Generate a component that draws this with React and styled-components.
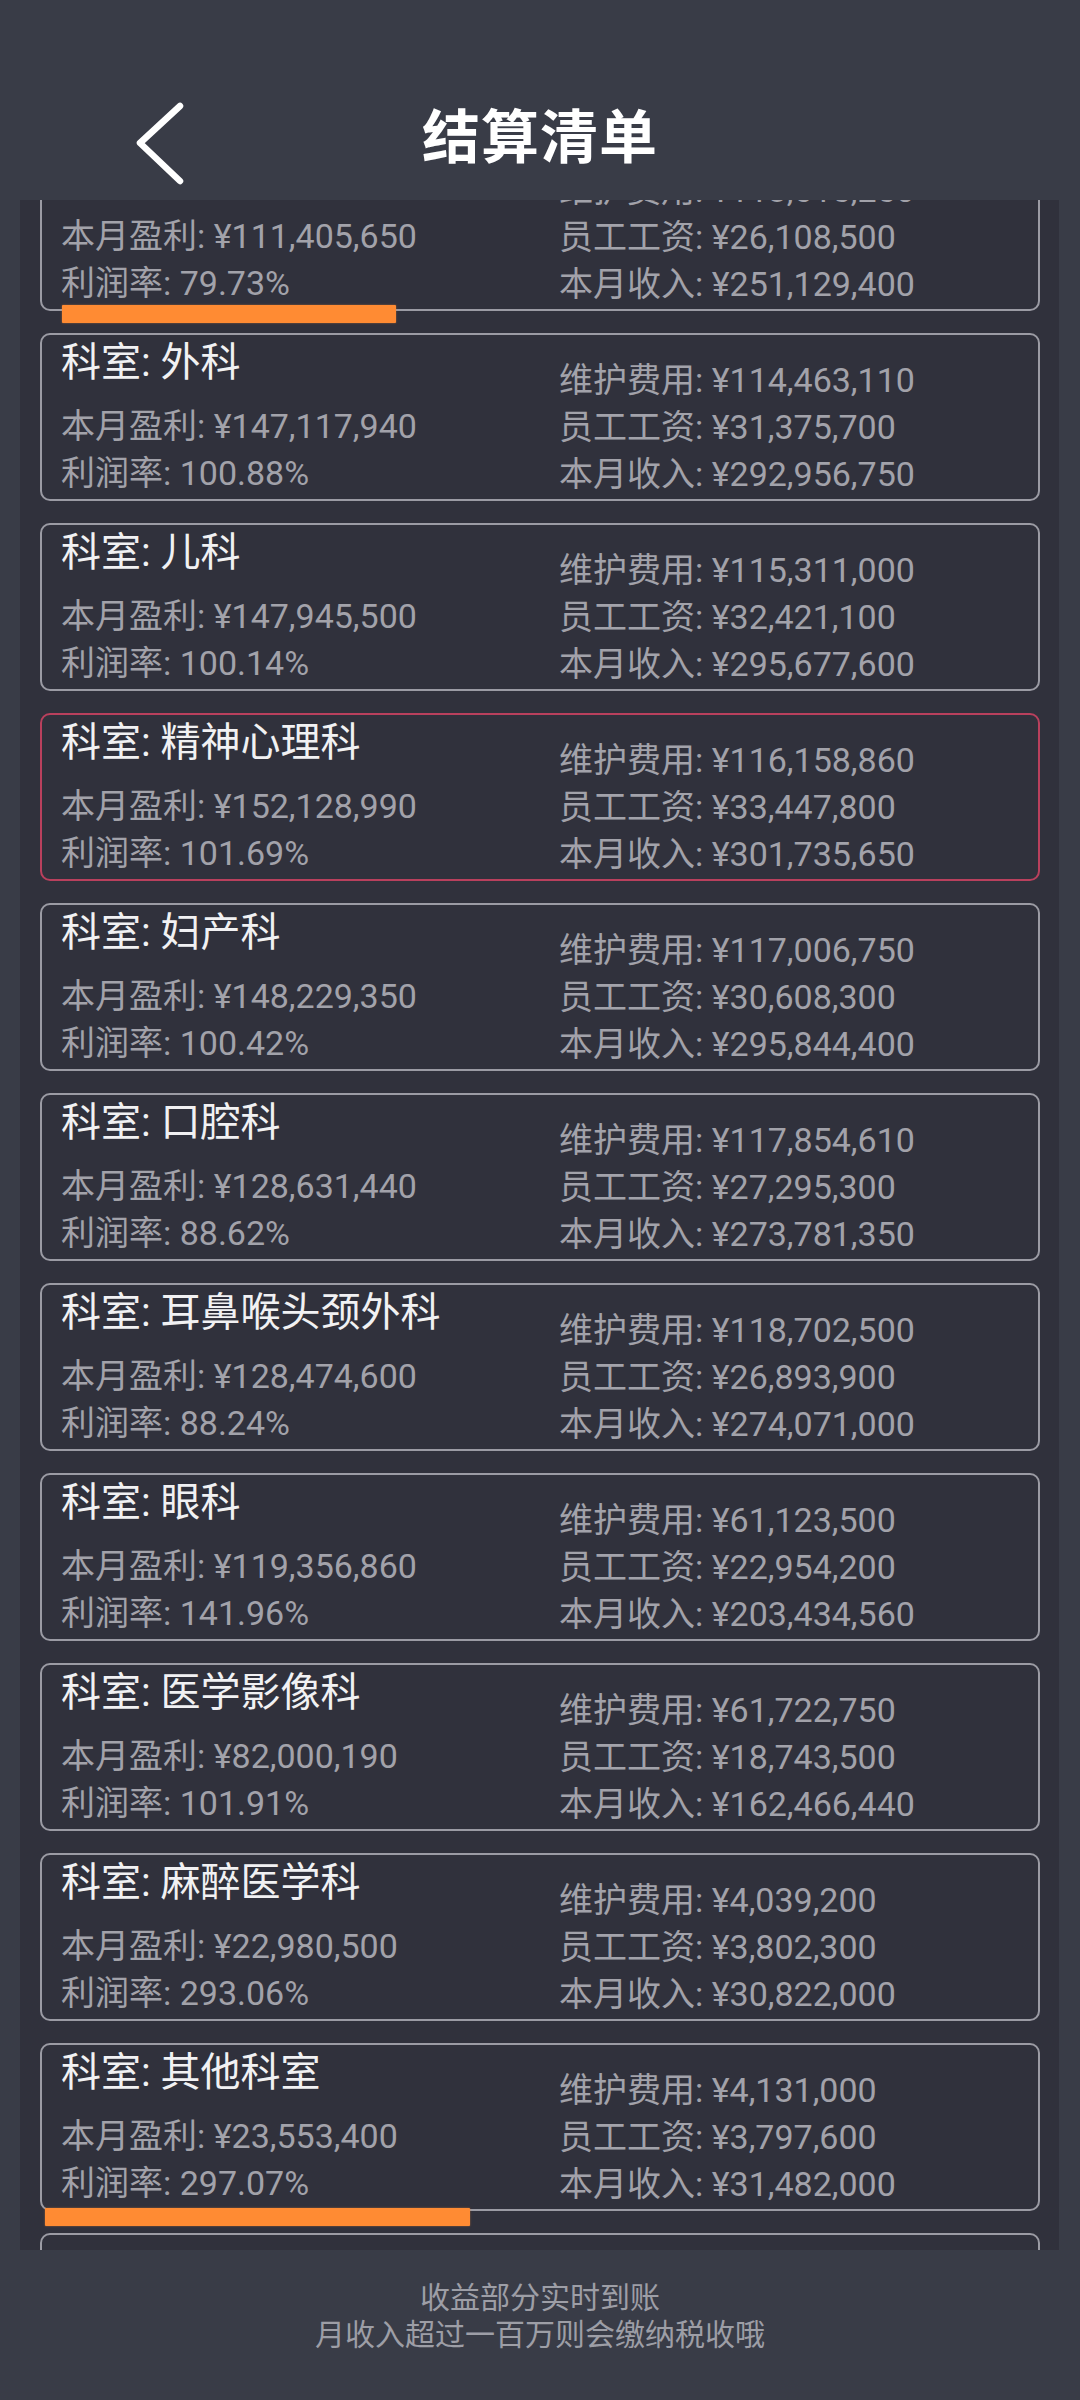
import styled, { createGlobalStyle } from "styled-components";

const GlobalStyle = createGlobalStyle`
  html, body {
    margin: 0;
    padding: 0;
    background: #393c47;
  }
  body {
    font-family: "Roboto", "Noto Sans CJK SC", sans-serif;
  }
`;

const departments = [
  { name: "内科", profit: "¥111,405,650", rate: "79.73%", upkeep: "¥113,615,250", salary: "¥26,108,500", income: "¥251,129,400" },
  { name: "外科", profit: "¥147,117,940", rate: "100.88%", upkeep: "¥114,463,110", salary: "¥31,375,700", income: "¥292,956,750" },
  { name: "儿科", profit: "¥147,945,500", rate: "100.14%", upkeep: "¥115,311,000", salary: "¥32,421,100", income: "¥295,677,600" },
  { name: "精神心理科", profit: "¥152,128,990", rate: "101.69%", upkeep: "¥116,158,860", salary: "¥33,447,800", income: "¥301,735,650", active: true },
  { name: "妇产科", profit: "¥148,229,350", rate: "100.42%", upkeep: "¥117,006,750", salary: "¥30,608,300", income: "¥295,844,400" },
  { name: "口腔科", profit: "¥128,631,440", rate: "88.62%", upkeep: "¥117,854,610", salary: "¥27,295,300", income: "¥273,781,350" },
  { name: "耳鼻喉头颈外科", profit: "¥128,474,600", rate: "88.24%", upkeep: "¥118,702,500", salary: "¥26,893,900", income: "¥274,071,000" },
  { name: "眼科", profit: "¥119,356,860", rate: "141.96%", upkeep: "¥61,123,500", salary: "¥22,954,200", income: "¥203,434,560" },
  { name: "医学影像科", profit: "¥82,000,190", rate: "101.91%", upkeep: "¥61,722,750", salary: "¥18,743,500", income: "¥162,466,440" },
  { name: "麻醉医学科", profit: "¥22,980,500", rate: "293.06%", upkeep: "¥4,039,200", salary: "¥3,802,300", income: "¥30,822,000" },
  { name: "其他科室", profit: "¥23,553,400", rate: "297.07%", upkeep: "¥4,131,000", salary: "¥3,797,600", income: "¥31,482,000" },
  { name: "", profit: "", rate: "", upkeep: "", salary: "", income: "" },
];

const Page = styled.div`
  position: relative;
  width: 1080px;
  height: 2400px;
  display: flex;
  flex-direction: column;
  overflow: hidden;
`;

const Header = styled.header`
  height: 200px;
  box-sizing: border-box;
  padding-top: 88px;
`;

const NavBar = styled.div`
  height: 100px;
  display: grid;
  grid-template-columns: 1fr auto 1fr;
  align-items: center;
`;

const BackButton = styled.div`
  padding-left: 134px;
  padding-top: 10px;
  display: flex;
  align-items: center;
`;

const Title = styled.h1`
  margin: 0;
  color: #ffffff;
  font-size: 58px;
  font-weight: 700;
  letter-spacing: 1px;
  line-height: 70px;
`;

const Panel = styled.main`
  height: 2050px;
  margin: 0 21px 0 20px;
  padding: 0 19px 0 20px;
  background: #30313c;
  overflow: hidden;
`;

const List = styled.div`
  margin-top: -57px;
  display: flex;
  flex-direction: column;
  gap: 22px;
`;

const Card = styled.section`
  height: 168px;
  box-sizing: border-box;
  border: 2px solid ${(p) => (p.$active ? "#b9405d" : "#9b9ba4")};
  border-radius: 10px;
  padding: 6px 19px 0;
  display: grid;
  grid-template-columns: 498px 1fr;
`;

const Column = styled.div`
  display: flex;
  flex-direction: column;
  padding-top: ${(p) => p.$offset || 0}px;
`;

const CardTitle = styled.h2`
  margin: 0 0 18px;
  color: #f1f1f3;
  font-size: 40px;
  font-weight: 400;
  line-height: 44px;
  white-space: nowrap;
`;

const Line = styled.div`
  color: #a2a2aa;
  font-size: 34px;
  line-height: 47px;
  white-space: nowrap;
`;

const Footer = styled.footer`
  flex: 1;
  padding-top: 29px;
  text-align: center;
  color: #9d9ea6;
  font-size: 30px;
  line-height: 37px;
`;

const Marker = styled.div`
  position: absolute;
  height: 18px;
  background: #ff8b33;
  border-radius: 1px;
  box-shadow: 0 0 2px rgba(255, 139, 51, 0.6);
`;

const BackIcon = () => (
  <svg width="54" height="90" viewBox="0 0 54 90" fill="none">
    <path d="M46 8 L6 45 L46 83" stroke="#ffffff" strokeWidth="6.5" strokeLinecap="round" strokeLinejoin="round" />
  </svg>
);

const DepartmentCard = ({ item }) => (
  <Card $active={item.active}>
    <Column>
      <CardTitle>{item.name ? `科室: ${item.name}` : "\u00a0"}</CardTitle>
      <Line>{item.profit && `本月盈利: ${item.profit}`}</Line>
      <Line>{item.rate && `利润率: ${item.rate}`}</Line>
    </Column>
    <Column $offset={16}>
      <Line>{item.upkeep && `维护费用: ${item.upkeep}`}</Line>
      <Line>{item.salary && `员工工资: ${item.salary}`}</Line>
      <Line>{item.income && `本月收入: ${item.income}`}</Line>
    </Column>
  </Card>
);

export default function App() {
  return (
    <Page>
      <GlobalStyle />
      <Header>
        <NavBar>
          <BackButton>
            <BackIcon />
          </BackButton>
          <Title>结算清单</Title>
          <div />
        </NavBar>
      </Header>
      <Panel>
        <List>
          {departments.map((item, i) => (
            <DepartmentCard key={i} item={item} />
          ))}
        </List>
      </Panel>
      <Footer>
        <div>收益部分实时到账</div>
        <div>月收入超过一百万则会缴纳税收哦</div>
      </Footer>
      <Marker style={{ left: 62, top: 305, width: 334 }} />
      <Marker style={{ left: 45, top: 2208, width: 425 }} />
    </Page>
  );
}
